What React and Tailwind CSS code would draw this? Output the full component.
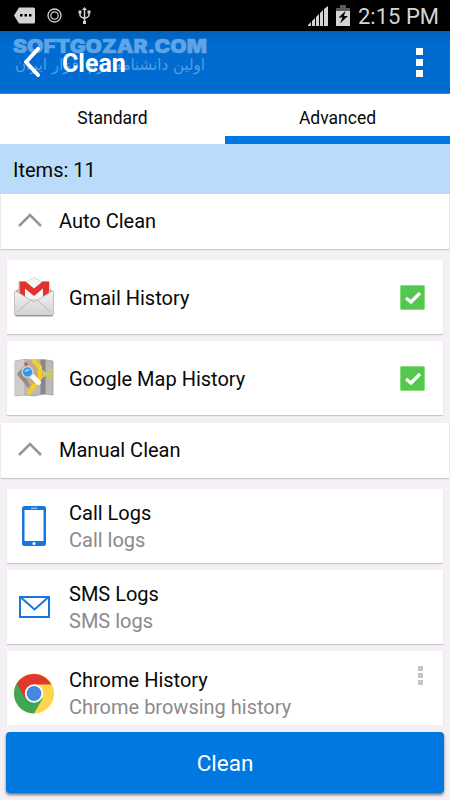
import { useState } from 'react';

const AUTO_ITEMS = [
  { id: 'gmail', title: 'Gmail History', Icon: GmailIcon },
  { id: 'maps', title: 'Google Map History', Icon: MapsIcon },
];

const MANUAL_ITEMS = [
  { id: 'calls', title: 'Call Logs', subtitle: 'Call logs', Icon: PhoneIcon },
  { id: 'sms', title: 'SMS Logs', subtitle: 'SMS logs', Icon: EnvelopeIcon },
  {
    id: 'chrome',
    title: 'Chrome History',
    subtitle: 'Chrome browsing history',
    Icon: ChromeIcon,
    hasMenu: true,
  },
];

function GmailIcon() {
  return (
    <svg width="40" height="40" viewBox="0 0 40 40">
      <defs>
        <linearGradient id="envelope" x1="0" y1="0" x2="0" y2="1">
          <stop offset="0" stopColor="#f4f3f4" />
          <stop offset="1" stopColor="#d3d1d3" />
        </linearGradient>
      </defs>
      <path d="M.5 15 5 11v8zM39.500 15 35 11v8z" fill="#aaa6aa" />
      <path d="M4.500 4.500H13L20 .5l7 4h8.500v20h-31z" fill="#f6f5f6" stroke="#d0ced0" strokeWidth=".7" />
      <path d="M5.500 4.500h6l8.500 7 8.500-7H35v14l-6 4V11.500l-9 7.500-9-7.500v11l-5.500-4z" fill="#df332b" />
      <path d="M.5 15c0-1 .5-1.500 1-1L20 25l18.500-11c.5-.5 1 0 1 1v22c0 1-.5 1.500-1.500 1.500H2C1 38.500.5 38 .5 37z" fill="url(#envelope)" stroke="#b8b5b8" strokeWidth=".8" />
      <path d="m3 35 14-12h6l14 12" fill="none" stroke="#bcb9bc" strokeWidth="1" />
      <path d="M1.500 38.800h37" stroke="#99969a" strokeWidth="1.500" />
    </svg>
  );
}

function MapsIcon() {
  return (
    <svg width="40" height="40" viewBox="0 0 40 40">
      <path d="m1 3 9-1.500L20 2l9-.5L39 3v34l-9-1-10 2-10-1-9 1z" fill="#bcb9b9" stroke="#999797" strokeWidth=".7" />
      <path d="m1 3 9-1.500v35L1 38z" fill="#cfcccc" />
      <path d="m26.500 2 5-.3V36l-5 .5z" fill="#8b8685" />
      <path d="M14 2h10l2.500 5-3 15-7 10-6-7L3 17z" fill="#c3ab91" />
      <path d="m3 16 4-5 9 16-2 3z" fill="#9c8980" />
      <path d="m19 2 7 7v11L14 36" fill="none" stroke="#f5ce27" strokeWidth="4" />
      <path d="m27 12 12 9M27 20l12-9M27 16h12" fill="none" stroke="#d2cd50" strokeWidth="2" />
      <circle cx="12" cy="6" r="1.700" fill="#d35247" />
      <path d="m17.500 17.500 7 7" stroke="#f9fafb" strokeWidth="5" strokeLinecap="round" />
      <circle cx="13.500" cy="14" r="5.300" fill="#3c91e7" stroke="#b7dcf8" strokeWidth="1.300" />
      <path d="M10.500 14c0-3 4-4 6-2-3 1-3 2-6 2z" fill="#8bc8fb" />
    </svg>
  );
}

function PhoneIcon() {
  return (
    <svg width="24" height="40" viewBox="0 0 24 40">
      <rect width="24" height="40" rx="2.500" fill="#1677df" />
      <path d="M2.500 4h19v31h-19z" fill="#fff" />
      <path d="M9 2.200h6" stroke="#c5e0fa" />
      <circle cx="12" cy="37.500" r="1.500" fill="#fff" />
    </svg>
  );
}

function EnvelopeIcon() {
  return (
    <svg className="ml-px" width="31" height="22" viewBox="0 0 31 22" fill="none" stroke="#1677df" strokeWidth="2">
      <path d="M1 1h29v20H1zM2 1.500l13.500 12L29 1.500" />
    </svg>
  );
}

function ChromeIcon() {
  return (
    <svg width="41" height="41" viewBox="0 0 40 40">
      <circle cx="20" cy="20" r="20" fill="#ffd54a" />
      <path d="M20 20 2.680 10A20 20 0 0 0 20 40l8.700-15z" fill="#40a653" />
      <path d="M2.680 10A20 20 0 0 1 37.300 11H20l-8.700 14z" fill="#dd392f" />
      <circle cx="20" cy="20" r="9.200" fill="#fff" />
      <circle cx="20" cy="20" r="7.400" fill="#4589df" />
    </svg>
  );
}

function Watermark() {
  return (
    <svg className="pointer-events-none absolute left-0 top-0" width="225" height="62">
      <text
        x="13"
        y="21.800"
        textLength="194"
        lengthAdjust="spacingAndGlyphs"
        fontFamily="Inter, sans-serif"
        fontSize="18.500"
        fontWeight="900"
        fill="#5fa5e6"
        stroke="#5fa5e6"
        strokeWidth=".5"
      >
        SOFTGOZAR.COM
      </text>
      <text
        x="205"
        y="39"
        direction="rtl"
        textLength="190"
        lengthAdjust="spacingAndGlyphs"
        fontFamily="'DejaVu Sans', sans-serif"
        fontSize="16"
        fill="#559cde"
      >
        اولین دانشنامه نرم افزار ایران
      </text>
    </svg>
  );
}

function StatusBar() {
  return (
    <div className="flex h-[31px] items-center justify-between bg-black pl-[14px] pr-3 text-[#d5d3d5]">
      <div className="flex items-center">
        <svg width="21" height="17" viewBox="0 0 21 17">
          <path d="M5 .5h14.500q1.500 0 1.500 1.500v13q0 1.500-1.500 1.500H5L0 8.500z" fill="currentColor" />
          <path d="M6 7h2.500v2.500H6zM10.500 7H13v2.500h-2.500zM15 7h2.500v2.500H15z" fill="#000" />
        </svg>
        <svg className="ml-3" width="15" height="15" viewBox="0 0 15 15" fill="none" stroke="currentColor">
          <circle cx="7.500" cy="7.500" r="6.500" strokeWidth="1.300" />
          <circle cx="7.500" cy="7.500" r="3.700" strokeWidth="1.200" />
        </svg>
        <svg className="ml-[16px]" width="13" height="17" viewBox="0 0 13 17" fill="none" stroke="currentColor" strokeWidth="1.500">
          <path d="M6.500 2v13M2 5v3q0 2 4.500 3.500Q11 10 11 8V5" />
          <path d="m4 3 2.500-3L9 3zM.5 3.500h3v3h-3zM9.500 3.500h3v3h-3zM5 14h3v3H5z" fill="currentColor" stroke="none" />
        </svg>
      </div>
      <div className="flex items-center">
        <svg width="20" height="20" viewBox="0 0 20 20" fill="currentColor">
          <path d="M0 20v-1l3-3v4zM4 15l3-3v8H4zM8 11l3-3v12H8zM12 7l3-3v16h-3zM16 3l4-3v20h-4z" />
        </svg>
        <svg className="ml-2" width="14" height="21" viewBox="0 0 14 21">
          <path d="M4 0h6v3h4v18H0V3h4z" fill="currentColor" />
          <path d="M0 3h4V0h6v3h4v3H0z" fill="#5b595b" />
          <path d="M9.500 6 2.500 12.500h4L4 18.500l8-7.500H8z" fill="#000" />
        </svg>
        <span className="ml-[8px] w-[80px] whitespace-nowrap pt-px text-[22px] leading-[31px]">2:15 PM</span>
      </div>
    </div>
  );
}

function Header() {
  return (
    <header className="relative flex h-[63px] items-center justify-between border-b border-[#3f8fdd] bg-gradient-to-b from-[#0061b9] via-[#006bd0] via-20% to-[#006bd0] pl-[23px] pr-[27px]">
      <Watermark />
      <button type="button" className="relative flex items-center text-white">
        <svg width="17" height="30" viewBox="0 0 17 30" fill="none" stroke="currentColor" strokeWidth="4">
          <path d="M15 2 3 15l12 13" strokeLinecap="round" strokeLinejoin="round" />
        </svg>
        <span className="ml-[22px] pt-[3px] text-[25px] font-bold leading-8">Clean</span>
      </button>
      <button type="button" className="flex flex-col gap-1" aria-label="Menu">
        <span className="size-[7px] bg-white" />
        <span className="size-[7px] bg-white" />
        <span className="size-[7px] bg-white" />
      </button>
    </header>
  );
}

function Tabs({ activeTab, onChange }) {
  return (
    <nav className="flex h-[50px] bg-white">
      {['Standard', 'Advanced'].map((tab) => (
        <button
          key={tab}
          type="button"
          className={`flex-1 border-b-8 pt-[6px] text-[17.5px] ${
            tab === activeTab ? 'border-[#0078df]' : 'border-transparent'
          }`}
          onClick={() => onChange(tab)}
        >
          {tab}
        </button>
      ))}
    </nav>
  );
}

function GroupHeader({ title }) {
  return (
    <div className="mx-px flex h-[55px] items-center bg-white pb-[2px] pl-[17px] shadow-[0_1px_1px_#cbc8ca]">
      <svg className="mb-[2px]" width="24" height="14" viewBox="0 0 24 14" fill="none" stroke="#969496" strokeWidth="2.500">
        <path d="m1 13 11-11 11 11" />
      </svg>
      <h2 className="ml-[17px] text-[20px] leading-6">{title}</h2>
    </div>
  );
}

function ItemCard({ item, children }) {
  const { Icon, title, subtitle, hasMenu } = item;
  return (
    <div
      className={`flex items-center bg-white pl-[7px] pr-[18px] shadow-[0_1px_1px_#cbc8ca] ${
        hasMenu ? 'h-[84px]' : 'h-[74px]'
      }`}
    >
      <div className="flex w-10 shrink-0 justify-center">
        <Icon />
      </div>
      <div className="ml-[15px] flex-1 whitespace-nowrap pt-[2px] text-[20px] leading-[27px]">
        <div>{title}</div>
        {subtitle ? <div className="text-[#8c8a8b]">{subtitle}</div> : null}
      </div>
      {children}
    </div>
  );
}

function Checkbox() {
  return (
    <svg className="shrink-0" width="25" height="25" viewBox="0 0 25 25">
      <rect x=".5" y=".5" width="24" height="24" rx="1" fill="#54c74e" stroke="#8bdc80" />
      <path d="m6 13 5 4 9-9" fill="none" stroke="#fff" strokeWidth="3.300" />
    </svg>
  );
}

function App() {
  const [activeTab, setActiveTab] = useState('Advanced');

  return (
    <div className="flex h-[800px] w-[450px] flex-col overflow-hidden bg-[#f5f0f5] font-['Roboto',sans-serif] text-[#080808]">
      <StatusBar />
      <Header />
      <Tabs activeTab={activeTab} onChange={setActiveTab} />
      <div className="h-[50px] bg-[#bbdbfa] px-[13px] text-[20px] leading-[52px]">Items: 11</div>

      <main className="h-[531px] shrink-0 overflow-hidden">
        <GroupHeader title="Auto Clean" />
        <div className="mb-2 mt-[11px] flex flex-col gap-[7px] px-[7px]">
          {AUTO_ITEMS.map((item) => (
            <ItemCard key={item.id} item={item}>
              <Checkbox />
            </ItemCard>
          ))}
        </div>
        <GroupHeader title="Manual Clean" />
        <div className="mt-[11px] flex flex-col gap-[7px] px-[7px]">
          {MANUAL_ITEMS.map((item) => (
            <ItemCard key={item.id} item={item}>
              {item.hasMenu ? (
                <button type="button" className="mb-[35px] mr-[2px] flex flex-col gap-[2px]" aria-label="More">
                  <span className="size-[5px] bg-[#c6c4c6]" />
                  <span className="size-[5px] bg-[#c6c4c6]" />
                  <span className="size-[5px] bg-[#c6c4c6]" />
                </button>
              ) : null}
            </ItemCard>
          ))}
        </div>
      </main>

      <button
        type="button"
        className="mx-[6px] mt-[7px] h-[61px] shrink-0 rounded-[4px] bg-[#0078df] pt-[3px] text-[22.5px] text-white shadow-[0_2px_3px_#777]"
      >
        Clean
      </button>
    </div>
  );
}

export default App;
